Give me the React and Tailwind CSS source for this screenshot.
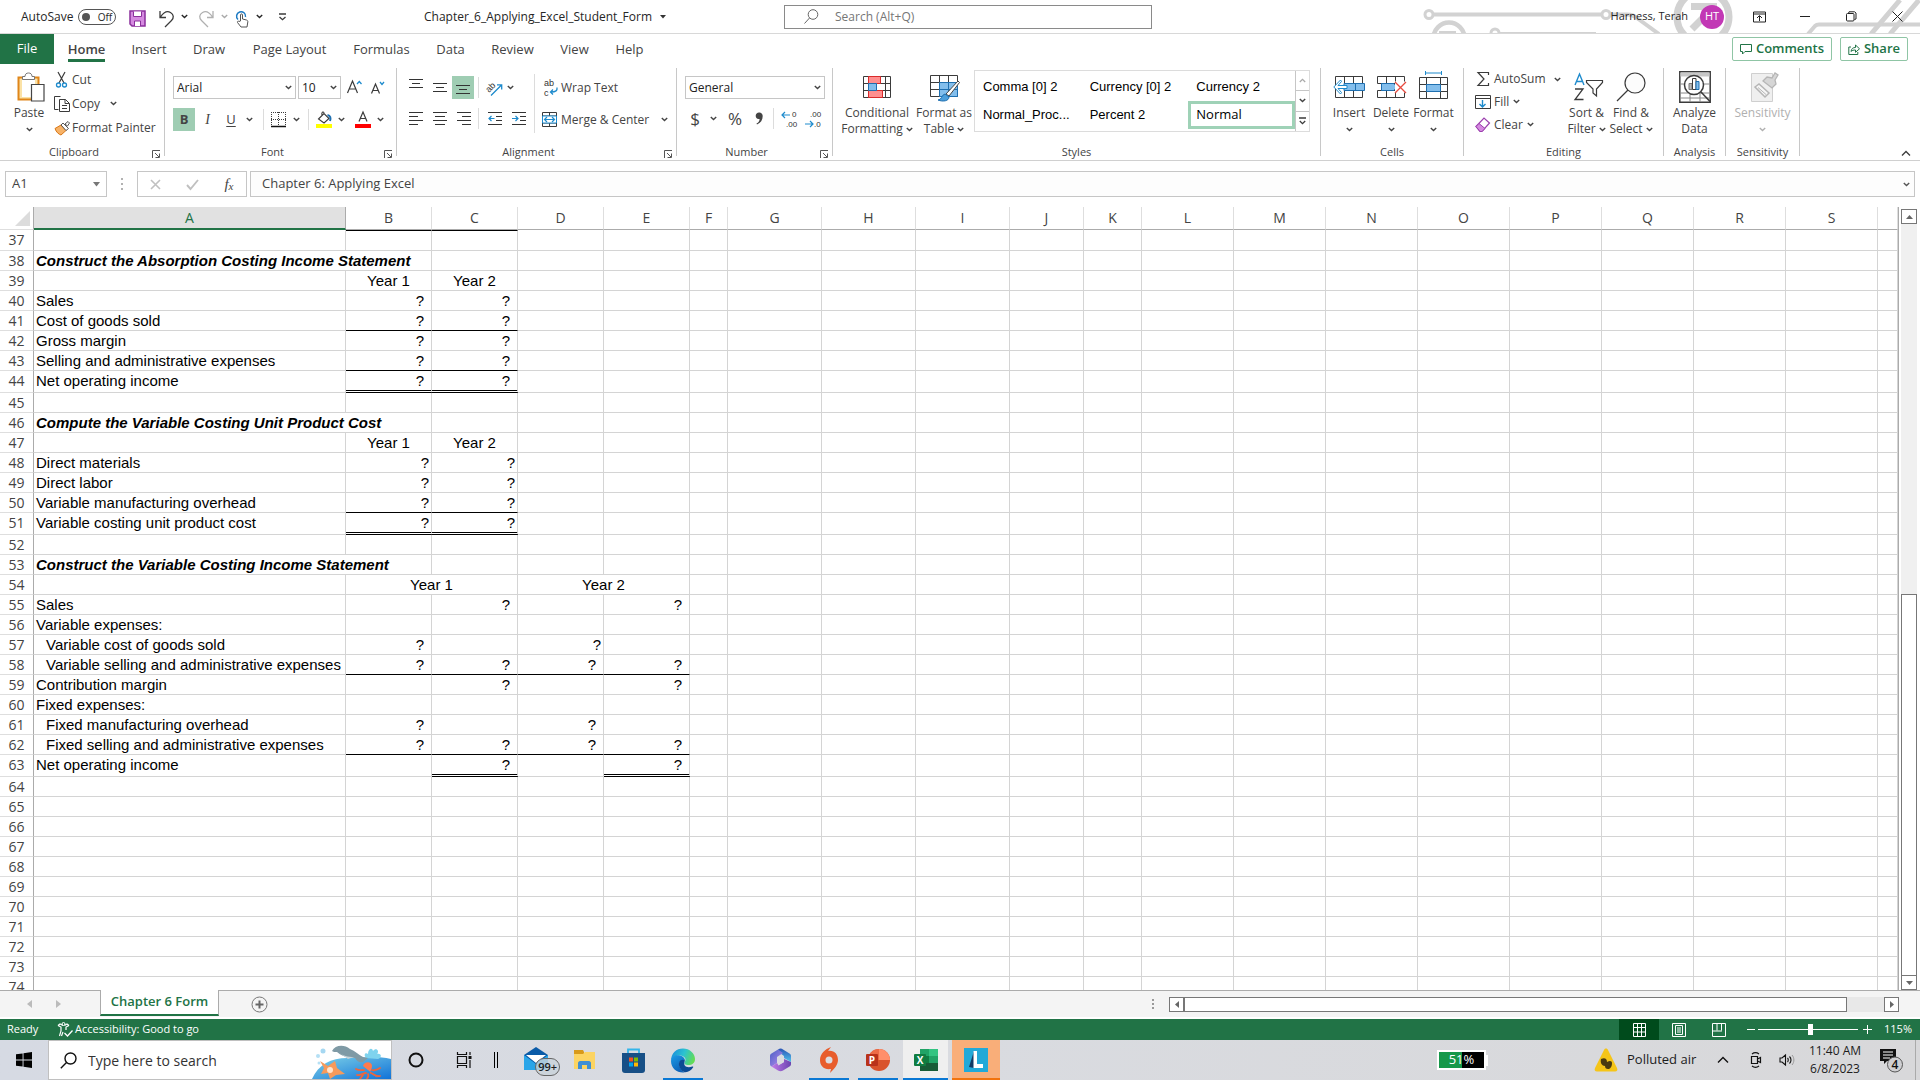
import React from "react";

const UI = "font-['Open_Sans','Noto_Sans',sans-serif]";

function Chev({ className = "text-[#444]" }) {
  return (
    <svg width="7" height="5" viewBox="0 0 7 5" className={`shrink-0 ${className}`} fill="none" stroke="currentColor" strokeWidth="1.4">
      <path d="M.8 1 3.500 3.600 6.200 1" />
    </svg>
  );
}

function Icon({ w = 16, h = 16, children, className = "" }) {
  return (
    <svg width={w} height={h} viewBox={`0 0 ${w} ${h}`} fill="none" stroke="#3b3b3b" strokeWidth="1" className={`shrink-0 overflow-visible ${className}`}>
      {children}
    </svg>
  );
}

function Glyphs({ x, y, size = 8, children }) {
  return (
    <text x={x} y={y} fontSize={size} fill="#333" stroke="none" className="font-['Liberation_Sans',sans-serif]">
      {children}
    </text>
  );
}

function Btn({ label, className = "", children }) {
  return (
    <button type="button" aria-label={label} className={`flex shrink-0 items-center justify-center ${className}`}>
      {children}
    </button>
  );
}

/* ---------- title bar ---------- */

function TitleArt() {
  return (
    <svg width="520" height="33" viewBox="0 0 520 33" className="pointer-events-none absolute top-0 right-0" fill="none" stroke="#d2d2d2" strokeWidth="4">
      <circle cx="29" cy="14.500" r="4" strokeWidth="3" />
      <path d="M33 14.500H202" />
      <circle cx="206" cy="14.500" r="4" strokeWidth="3" />
      <path d="M210 14.500h17c6 0 8 2 12 5L259 34" />
      <circle cx="49" cy="38" r="15.500" strokeWidth="4.500" />
      <path d="M39 33h17" />
      <circle cx="95" cy="33" r="4" strokeWidth="3" />
      <path d="M99 33.500h97" strokeWidth="3" />
      <circle cx="303" cy="17" r="26" strokeWidth="7" />
      <path d="M291 6.500h26" strokeWidth="7" />
      <path d="M292 29 312 9" strokeWidth="7" />
      <path d="M408 34l7-8c1-1 2-1.500 4-1.500H520" />
      <path d="M471 34 500 0M490 34 519 0" strokeWidth="5" />
    </svg>
  );
}

function TitleBar() {
  return (
    <header className="relative flex h-[34px] shrink-0 items-center border-b border-[#d8d8d8] bg-white text-[12px] text-[#262626]">
      <TitleArt />
      <div className="flex w-[424px] shrink-0 items-center pl-[21px]">
        <span className="w-[57px] whitespace-nowrap">AutoSave</span>
        <Btn label="AutoSave off" className="h-4 w-[38px] gap-2 rounded-full border border-[#555] text-[10px] leading-none">
          <span className="size-2 rounded-full bg-[#555]" />
          <span>Off</span>
        </Btn>
        <Btn label="Save" className="ml-[11px] w-5">
          <Icon w={17} h={17} className="mt-1">
            <path d="M1 1h15v15H3l-2-2z" fill="#d58ae0" stroke="#8b2f9c" strokeWidth="1.500" />
            <path d="M4.500 1.500v5h8v-5" fill="#fff" stroke="#8b2f9c" />
            <path d="M5.500 16v-5h6v5" fill="#fff" stroke="#8b2f9c" />
          </Icon>
        </Btn>
        <Btn label="Undo" className="ml-[7px] w-6">
          <Icon w={15} h={17} className="mt-1">
            <path d="M1 1v6.500h6M1.500 7C4.500 2.500 8 .5 11.500 2.500s3.500 5.500 1 8L6 17" strokeWidth="1.300" />
          </Icon>
        </Btn>
        <Chev className="ml-[3px]" />
        <Btn label="Redo" className="ml-[6px] w-6">
          <Icon w={15} h={17} className="mt-1">
            <path d="M14 1v6.500H8M13.500 7C10.500 2.500 7 .5 3.500 2.500s-3.500 5.500-1 8L9 17" stroke="#b0b0b0" strokeWidth="1.300" />
          </Icon>
        </Btn>
        <Chev className="ml-[3px] text-[#aaa]" />
        <Btn label="Touch mode" className="ml-1 w-5">
          <Icon w={14} h={18} className="mt-1">
            <path d="M3 9.500A4.500 4.500 0 1 1 10.500 7" stroke="#1e7bc4" strokeWidth="1.500" />
            <path d="M5.500 11V5c0-1.500 2-1.500 2 0v4l4 1c1 .3 1.500 1 1.300 2L12 17H6l-3.500-4.500c-.6-1 .8-1.800 1.500-1z" fill="#fff" stroke="#555" />
          </Icon>
        </Btn>
        <Chev className="ml-1" />
        <Btn label="Customize toolbar" className="ml-[11px] w-4">
          <Icon w={9} h={8}>
            <path d="M1 1h7M1.500 4 4.500 6.700 7.500 4" strokeWidth="1.300" />
          </Icon>
        </Btn>
      </div>
      <div className="flex w-[360px] shrink-0 items-center gap-2">
        <span>Chapter_6_Applying_Excel_Student_Form</span>
        <svg width="6" height="4" fill="#333"><path d="M0 0h6L3 3.500z" /></svg>
      </div>
      <label className="flex h-6 w-[368px] shrink-0 items-center gap-4 border border-[#8a8a8a] bg-white pl-[19px]">
        <Icon w={15} h={15}>
          <circle cx="9" cy="5.500" r="4.800" stroke="#666" />
          <path d="M5.500 9 .5 14.500" stroke="#666" />
        </Icon>
        <input aria-label="Search" placeholder="Search (Alt+Q)" className="min-w-0 flex-1 bg-transparent text-[12px] outline-none placeholder:text-[#767676]" />
      </label>
      <div className="relative ml-auto flex items-center">
        <span className="mr-3 text-[11px]">Harness, Terah</span>
        <Btn label="Account" className="mr-3 size-6 rounded-full bg-[#c238b5] text-[11px] text-white">HT</Btn>
        <Btn label="Ribbon display options" className="h-8 w-[46px]">
          <Icon w={13} h={12}>
            <path d="M.5 1h12v10H.5zM.5 3h12M6.500 10V5M4 7l2.500-2.500L9 7" stroke="#222" />
          </Icon>
        </Btn>
        <Btn label="Minimize" className="h-8 w-[46px]">
          <Icon w={10} h={2}><path d="M0 .5h10" stroke="#222" /></Icon>
        </Btn>
        <Btn label="Restore" className="h-8 w-[46px]">
          <Icon w={11} h={11}>
            <rect x=".5" y="2.500" width="7.500" height="7.500" rx="1" stroke="#222" />
            <path d="M2.500 2.500 3 .8h5.500L10 2v6l-1.500.5" stroke="#222" />
          </Icon>
        </Btn>
        <Btn label="Close" className="h-8 w-[46px]">
          <Icon w={11} h={11}><path d="m.5.5 10 10m0-10-10 10" stroke="#222" /></Icon>
        </Btn>
      </div>
    </header>
  );
}

/* ---------- tabs ---------- */

const TABS = [
  ["Home", "w-[65px]"],
  ["Insert", "w-[60px]"],
  ["Draw", "w-[60px]"],
  ["Page Layout", "w-[101px]"],
  ["Formulas", "w-[83px]"],
  ["Data", "w-[55px]"],
  ["Review", "w-[69px]"],
  ["View", "w-[55px]"],
  ["Help", "w-[55px]"],
];

function Tabs() {
  return (
    <nav className="flex h-[30px] shrink-0 items-center bg-white text-[13px] text-[#444]">
      <button type="button" className="h-[30px] w-[54px] bg-[#217346] text-white">File</button>
      {TABS.map(([t, w]) => (
        <button key={t} type="button" className={`flex h-[30px] justify-center whitespace-nowrap ${w}`}>
          <span className={`h-7 border-b-3 leading-[30px] ${t === "Home" ? "border-[#217346] font-semibold" : "border-transparent"}`}>{t}</span>
        </button>
      ))}
      <div className="ml-auto flex gap-2 pr-3 font-semibold text-[#217346]">
        <button type="button" className="flex h-6 w-[100px] items-center justify-center gap-1 rounded-xs border border-[#8fc5a5]">
          <Icon w={12} h={12}><path d="M.5 1.500h11v7H5L2.500 11V8.500h-2z" stroke="#217346" /></Icon>
          Comments
        </button>
        <button type="button" className="flex h-6 w-[68px] items-center justify-center gap-1 rounded-xs border border-[#8fc5a5]">
          <Icon w={12} h={12}>
            <path d="M3 4H.8v7.500h9V9M3 8.500c.5-3 2-4 4.500-4V2l4 3.800-4 3.500V7C5.500 7 4 7.300 3 8.500z" stroke="#217346" />
          </Icon>
          Share
        </button>
      </div>
    </nav>
  );
}

/* ---------- ribbon ---------- */

function Group({ name, width, launcher = true, children }) {
  return (
    <section aria-label={name} className={`mt-1 flex h-[88px] shrink-0 flex-col border-r border-[#c8c8c8] ${width}`}>
      <div className="flex h-[76px]">{children}</div>
      <div className="flex h-3 items-start">
        <span className="flex-1 text-center text-[11px] leading-4">{name}</span>
        {launcher && (
          <Btn label={`${name} settings`} className="h-4 w-4 pt-1">
            <Icon w={9} h={9}>
              <path d="M.5 8V.5H8M3 3l4 4M7.500 3.500v4h-4" stroke="#555" />
            </Icon>
          </Btn>
        )}
      </div>
    </section>
  );
}

function Big({ lines, width, icon, chev = true, muted = false }) {
  return (
    <button type="button" className={`flex shrink-0 flex-col items-center whitespace-nowrap text-[12px] leading-4 ${width} ${muted ? "text-[#b0b0b0]" : ""}`}>
      <span className="flex h-[37px] items-center justify-center">{icon}</span>
      <span>{lines[0]}</span>
      <span className="flex h-4 items-center gap-[3px]">
        {lines[1]}
        {chev && <Chev className={muted ? "text-[#b0b0b0]" : "text-[#444]"} />}
      </span>
    </button>
  );
}

function VSep({ h = "h-[21px]" }) {
  return <span className={`w-px shrink-0 bg-[#dcdcdc] ${h}`} />;
}

function Lines({ rows, children, y0 = 1 }) {
  return (
    <Icon w={14} h={15}>
      <path d={rows.map(([x, w], i) => `M${x} ${y0 + i * 4 + 0.5}h${w}`).join("")} stroke="#333" />
      {children}
    </Icon>
  );
}

const LEFT = [[0, 14], [0, 9], [0, 14], [0, 9]];
const MID = [[0, 14], [2, 10], [0, 14], [2, 10]];
const RIGHT = [[0, 14], [5, 9], [0, 14], [5, 9]];
const SHORT3 = [[0, 14], [3, 8], [0, 14]];

function Clipboard() {
  return (
    <Group name="Clipboard" width="w-[165px]">
      <Big
        width="w-[58px]"
        lines={["Paste", ""]}
        icon={
          <Icon w={28} h={30} className="ml-1">
            <path d="M1.500 5.500h20v22h-20z" fill="#fbe2a6" stroke="#e0861a" strokeWidth="2" />
            <path d="M5 8h13v17H5z" fill="#fff" stroke="none" />
            <path d="M5.500 7.500v-3H8C8 2 9.500 1 11.500 1S15 2 15 4.500h2.500v3z" fill="#fff" stroke="#777" />
            <path d="M14.500 12.500h12.500v16.500H14.500z" fill="#fff" stroke="#444" strokeWidth="1.200" />
          </Icon>
        }
      />
      <div className="-ml-1 flex flex-col text-[12px]">
        <button type="button" className="flex h-[23px] items-center">
          <span className="flex w-[18px] pl-[2px]">
            <Icon w={11} h={16}>
              <path d="M2 0 8 11M9 0 3 11" strokeWidth="1.200" />
              <circle cx="2.500" cy="13" r="2" stroke="#1e8bcd" strokeWidth="1.300" />
              <circle cx="8.500" cy="13" r="2" stroke="#1e8bcd" strokeWidth="1.300" />
            </Icon>
          </span>
          Cut
        </button>
        <button type="button" className="flex h-[25px] items-center">
          <span className="flex w-[18px]">
            <Icon w={16} h={16}>
              <path d="M4.500 13.500h-4V.5h6M5.500 3.500h6l4 4v8h-10zM11 3.500v4h4M8 9.500h5M8 12.500h5" />
            </Icon>
          </span>
          Copy
          <Chev className="ml-[10px]" />
        </button>
        <button type="button" className="flex h-[24px] items-center whitespace-nowrap">
          <span className="flex w-[18px]">
            <Icon w={16} h={15}>
              <path d="M1 7.500 7 4l5 5.500L7 14c-2-.5-5-3-6-6.500z" fill="#f7b267" stroke="#d97614" />
              <path d="m7 4 2-2 5.500 5.500L12 9.500zM11 3l3-2.500 1.500 1.500L13.500 5z" fill="#fff" stroke="#555" />
            </Icon>
          </span>
          Format Painter
        </button>
      </div>
    </Group>
  );
}

function FontGroup() {
  return (
    <Group name="Font" width="w-[232px]">
      <div className="flex flex-col pl-2 pt-2">
        <div className="flex h-[23px] items-center">
          <div className="flex h-[23px] w-[123px] items-center border border-[#c6c6c6] bg-white px-[3px]">
            <input aria-label="Font name" defaultValue="Arial" className="min-w-0 flex-1 text-[12px] text-[#222] outline-none" />
            <Chev />
          </div>
          <div className="ml-[2px] flex h-[23px] w-[43px] items-center border border-[#c6c6c6] bg-white px-[3px]">
            <input aria-label="Font size" defaultValue="10" className="min-w-0 flex-1 text-[12px] text-[#222] outline-none" />
            <Chev />
          </div>
          <Btn label="Increase font size" className="ml-[2px] w-[22px]">
            <Icon w={15} h={15}>
              <path d="m.5 13 5-12 5 12M2.200 9h6.600" strokeWidth="1.200" />
              <path d="m10 4 2.300-2.500L14.500 4" stroke="#1e8bcd" strokeWidth="1.300" />
            </Icon>
          </Btn>
          <Btn label="Decrease font size" className="w-[26px]">
            <Icon w={14} h={14}>
              <path d="m.5 12.500 4-9.500 4 9.500M2 9.500h5" strokeWidth="1.200" />
              <path d="m9 1 2 2.500L13 1" stroke="#1e8bcd" strokeWidth="1.300" />
            </Icon>
          </Btn>
        </div>
        <div className="mt-[9px] flex h-[23px] items-center">
          <Btn label="Bold" className="h-[23px] w-[22px] bg-[#9fcdb3] text-[13px] font-bold">B</Btn>
          <Btn label="Italic" className="w-[25px] font-['Liberation_Serif',serif] text-[14px] italic">I</Btn>
          <Btn label="Underline" className="w-[22px] text-[13px] underline underline-offset-2">U</Btn>
          <Chev className="ml-1" />
          <span className="w-[10px]" />
          <VSep />
          <Btn label="Borders" className="ml-[7px]">
            <Icon w={15} h={16}>
              <path d="M.5 0v14M14.500 0v14M0 .5h15M7.500 0v14M0 7.500h15" strokeDasharray="1 1" />
              <path d="M0 14.500h15" stroke="#111" strokeWidth="1.500" />
            </Icon>
          </Btn>
          <Chev className="ml-[7px]" />
          <span className="w-2" />
          <VSep />
          <Btn label="Fill colour" className="ml-[7px]">
            <Icon w={16} h={17}>
              <path d="m2.500 8 5.500-5.500L13 7.500 8 12zM8 2.500C8 0 5 .5 6 4.500" strokeWidth="1.100" />
              <path d="M11.500 4c3 .5 3.500 3 2.500 6" stroke="#1e6fb0" strokeWidth="2" />
              <path d="M0 13h16v4H0z" fill="#ffff00" stroke="none" />
            </Icon>
          </Btn>
          <Chev className="ml-[6px]" />
          <Btn label="Font colour" className="ml-[10px]">
            <Icon w={16} h={17}>
              <path d="m4 10.500 4-9.500 4 9.500M5.300 7.500h5.400" strokeWidth="1.200" />
              <path d="M0 13h16v4H0z" fill="#f00" stroke="none" />
            </Icon>
          </Btn>
          <Chev className="ml-[6px]" />
        </div>
      </div>
    </Group>
  );
}

function Alignment() {
  return (
    <Group name="Alignment" width="w-[280px]">
      <div className="flex w-[137px] shrink-0 flex-col pl-[7px] pt-2">
        <div className="flex h-[23px] items-center">
          <Btn label="Top align" className="w-6 pb-1"><Lines rows={SHORT3} /></Btn>
          <Btn label="Middle align" className="w-6"><Lines rows={SHORT3} y0={3} /></Btn>
          <Btn label="Bottom align" className="h-[23px] w-[22px] bg-[#9fcdb3]"><Lines rows={SHORT3} y0={5} /></Btn>
          <span className="w-1" />
          <VSep />
          <Btn label="Orientation" className="ml-[7px]">
            <Icon w={17} h={16}>
              <g transform="rotate(-45 5 8)"><Glyphs x="0" y="10" size={9}>ab</Glyphs></g>
              <path d="M5 15.500 15.500 5M11 4.800h4.700v4.700" stroke="#1e8bcd" strokeWidth="1.300" />
            </Icon>
          </Btn>
          <Chev className="ml-1" />
        </div>
        <div className="mt-2 flex h-[23px] items-center">
          <Btn label="Align left" className="w-6"><Lines rows={LEFT} /></Btn>
          <Btn label="Centre" className="w-6"><Lines rows={MID} /></Btn>
          <Btn label="Align right" className="w-6"><Lines rows={RIGHT} /></Btn>
          <span className="w-[2px]" />
          <VSep />
          <Btn label="Decrease indent" className="ml-[4px] w-6">
            <Lines rows={[[0, 14], [8, 6], [8, 6], [0, 14]]}>
              <path d="M6.500 7.500H1M3.500 5 1 7.500 3.500 10" stroke="#1e8bcd" strokeWidth="1.200" />
            </Lines>
          </Btn>
          <Btn label="Increase indent" className="w-6">
            <Lines rows={[[0, 14], [8, 6], [8, 6], [0, 14]]}>
              <path d="M0 7.500h5.500M3.500 5 6 7.500 3.500 10" stroke="#1e8bcd" strokeWidth="1.200" />
            </Lines>
          </Btn>
        </div>
      </div>
      <span className="mt-[6px] h-[59px] w-px bg-[#dcdcdc]" />
      <div className="flex flex-col pl-[7px] pt-2 text-[12px]">
        <button type="button" className="flex h-[23px] items-center gap-[3px]">
          <Icon w={16} h={17}>
            <Glyphs x="2" y="7" size={9}>ab</Glyphs>
            <Glyphs x="2" y="17" size={9}>c</Glyphs>
            <path d="M15 8.500c.5 3-1 4.500-6 4.500M11 10.500 8.500 13l2.500 2.500" stroke="#1e8bcd" strokeWidth="1.300" />
          </Icon>
          Wrap Text
        </button>
        <button type="button" className="mt-[9px] flex h-[23px] items-center gap-1 whitespace-nowrap">
          <Icon w={15} h={15}>
            <path d="M.5.500h14v14H.5zM.5 4h14M.5 11h14M7.500.5V4M7.500 11v3.500" />
            <path d="M.5 4h14v7H.5z" fill="#fff" stroke="#1e8bcd" />
            <path d="M2.500 7.500h10M5 5 2.500 7.500 5 10M10 5l2.500 2.500L10 10" stroke="#1e8bcd" strokeWidth="1.200" />
          </Icon>
          Merge &amp; Center
          <Chev className="ml-2" />
        </button>
      </div>
    </Group>
  );
}

function NumberGroup() {
  return (
    <Group name="Number" width="w-[156px]">
      <div className="flex flex-col pl-2 pt-2">
        <div className="flex h-[23px] w-[140px] items-center border border-[#c6c6c6] bg-white px-[3px]">
          <input aria-label="Number format" defaultValue="General" className="min-w-0 flex-1 text-[12px] text-[#222] outline-none" />
          <Chev />
        </div>
        <div className="mt-2 flex h-[23px] items-center">
          <Btn label="Accounting format" className="w-5 text-[17px]">$</Btn>
          <Chev className="ml-[5px]" />
          <Btn label="Percent style" className="ml-[6px] w-6 text-[17px]">%</Btn>
          <Btn label="Comma style" className="w-6">
            <Icon w={9} h={13}>
              <path d="M4 .5a3.300 3.300 0 0 1 3.700 3.500c0 4-2 7-5.700 8.500l-.5-1C3.500 10.500 4.500 9 4.600 7 2 7.500.7 6 .7 3.800.7 2 2.200.5 4 .5z" fill="#444" stroke="none" />
            </Icon>
          </Btn>
          <span className="w-[2px]" />
          <VSep />
          <Btn label="Increase decimal" className="ml-[3px] w-6">
            <Icon w={17} h={18}>
              <path d="M9 5H1M4 2 1 5l3 3" stroke="#1e8bcd" strokeWidth="1.200" />
              <Glyphs x="11" y="7">0</Glyphs>
              <Glyphs x="5" y="17">.00</Glyphs>
            </Icon>
          </Btn>
          <Btn label="Decrease decimal" className="w-6">
            <Icon w={17} h={18}>
              <Glyphs x="5" y="7">.00</Glyphs>
              <Glyphs x="9" y="17">.0</Glyphs>
              <path d="M0 14h8M5 11l3 3-3 3" stroke="#1e8bcd" strokeWidth="1.200" />
            </Icon>
          </Btn>
        </div>
      </div>
    </Group>
  );
}

const STYLES = ["Comma [0] 2", "Currency [0] 2", "Currency 2", "Normal_Proc...", "Percent 2", "Normal"];

function Styles() {
  return (
    <Group name="Styles" width="w-[488px]" launcher={false}>
      <Big
        width="w-[76px] ml-[6px]"
        lines={["Conditional", "Formatting"]}
        icon={
          <Icon w={28} h={22}>
            <path d="M.5.500h27v21H.5zM5.500.5v21M22.500.5v21M.5 7.500h27M.5 14.500h27" fill="#fff" />
            <path d="M5.500.5h12v7h-12zM5.500 14.500h14v7h-14z" fill="#ff8f8f" stroke="#d92b2b" />
            <path d="M5.500 7.500h8v7h-8z" fill="#83beec" stroke="#1e6fb0" />
          </Icon>
        }
      />
      <Big
        width="w-[58px]"
        lines={["Format as", "Table"]}
        icon={
          <Icon w={30} h={28} className="mt-1 ml-[2px]">
            <path d="M.5.500h27v21H.5zM9.500.5v21M18.500.5v21M.5 7.500h27M.5 14.500h27" fill="#fff" />
            <path d="M9.500 7.500h18v14h-18z" fill="#83beec" stroke="#1e6fb0" />
            <path d="M9.500 14.500h18M18.500 7.500v14" stroke="#1e6fb0" />
            <path d="m16 19 12-13 1.500 1.500L19 21z" fill="#fff" stroke="#444" />
            <path d="M8 25c4 0 3-5 7-6l4 3c0 4-6 5-11 3z" fill="#4d9fdb" stroke="#1e6fb0" />
          </Icon>
        }
      />
      <div className="ml-[1px] mt-[2px] flex h-[62px] w-[336px] border border-[#dcdcdc] bg-white">
        <div className="grid w-[320px] grid-cols-3 grid-rows-2 pt-[1px] pb-[2px] font-['Liberation_Sans',Arial,sans-serif] text-[13px] text-black">
          {STYLES.map((s) => (
            <button
              key={s}
              type="button"
              className={`flex items-center whitespace-nowrap border-3 pl-[5px] text-left ${s === "Normal" ? "font-['Open_Sans','Noto_Sans',sans-serif] border-[#9fd2b7]" : "border-transparent"}`}
            >
              {s}
            </button>
          ))}
        </div>
        <div className="flex flex-1 flex-col border-l border-[#c6c6c6]">
          <Btn label="Scroll up" className="flex-1"><Icon w={7} h={5}><path d="M.8 4 3.500 1.400 6.200 4" stroke="#aaa" strokeWidth="1.300" /></Icon></Btn>
          <Btn label="Scroll down" className="flex-1 border-y border-[#c6c6c6]"><Chev /></Btn>
          <Btn label="More styles" className="flex-1"><Icon w={7} h={8}><path d="M0 1h7M.8 4 3.500 6.600 6.200 4" strokeWidth="1.300" /></Icon></Btn>
        </div>
      </div>
    </Group>
  );
}

function Cells() {
  return (
    <Group name="Cells" width="w-[143px]" launcher={false}>
      <Big
        width="w-[42px] ml-[7px]"
        lines={["Insert", ""]}
        icon={
          <Icon w={32} h={22}>
            <path d="M2.500.5h27v21h-27zM11.500.5v21M20.500.5v21" fill="#fff" />
            <path d="M11 7.500h20.500v7H11z" fill="#83beec" stroke="#1e6fb0" />
            <path d="M22.500 7.500v7" stroke="#1e6fb0" />
            <path d="M14 9.500H5l3.500-4L7.500 4 .8 11l6.700 7 1-1.500-3.500-4h9z" fill="#fff" stroke="#1e8bcd" />
          </Icon>
        }
      />
      <Big
        width="w-[42px]"
        lines={["Delete", ""]}
        icon={
          <Icon w={30} h={22} className="ml-[2px]">
            <path d="M.5.500h27v7H.5zM.5 14.500h27v7H.5zM9.500.5v7M18.500.5v7M9.500 14.500v7M18.500 14.500v7" fill="#fff" />
            <path d="M4.500 7.500h12l4 3.500-4 3.500h-12z" fill="#83beec" stroke="#1e6fb0" />
            <path d="M18 5.500h11v11H18z" fill="#fff" stroke="none" />
            <path d="m18 6 11 11M29 6 18 17" stroke="#e84a3f" strokeWidth="1.300" />
          </Icon>
        }
      />
      <Big
        width="w-[43px]"
        lines={["Format", ""]}
        icon={
          <Icon w={29} h={28} className="-mt-1">
            <path d="M6.500 2h16M6.500 0v4M22.500 0v4" stroke="#1e8bcd" />
            <path d="M.5 6.500h28v21H.5zM7.500 6.500v21M21.500 6.500v21M.5 13.500h28M.5 20.500h28" fill="#fff" />
            <path d="M7.500 13.500h14v7h-14z" fill="#83beec" stroke="#1e6fb0" />
          </Icon>
        }
      />
    </Group>
  );
}

function Editing() {
  return (
    <Group name="Editing" width="w-[200px]" launcher={false}>
      <div className="flex w-[101px] shrink-0 flex-col pr-1 pl-[11px] text-[12px]">
        <button type="button" className="flex h-[22px] items-center">
          <span className="flex w-[19px] pl-[2px]"><Icon w={12} h={14}><path d="M11.500 3V.5H1L7 7l-6 6.500h10.500V11" strokeWidth="1.200" /></Icon></span>
          AutoSum
          <Chev className="ml-auto" />
        </button>
        <button type="button" className="flex h-[23px] items-center">
          <span className="flex w-[19px]">
            <Icon w={16} h={14}>
              <path d="M.5.500h15v13H.5zM.5 3.500h15" />
              <path d="M7.500 5v7M4.500 9l3 3 3-3" stroke="#1e8bcd" strokeWidth="1.400" />
            </Icon>
          </span>
          Fill
          <Chev className="ml-1" />
        </button>
        <button type="button" className="flex h-[23px] items-center">
          <span className="flex w-[19px]">
            <Icon w={16} h={16}>
              <path d="m1 9.500 8-8.500 5.500 5L7 14.500H5z" fill="#fff" stroke="#9b3fae" strokeWidth="1.200" />
              <path d="m1 9.500 3-3 6 5-3 3H5z" fill="#d58ae0" stroke="#9b3fae" />
            </Icon>
          </span>
          Clear
          <Chev className="ml-1" />
        </button>
      </div>
      <Big
        width="w-[43px]"
        lines={["Sort &", "Filter"]}
        icon={
          <Icon w={29} h={28} className="ml-1">
            <path d="m1 12 4.500-11L10 12M2.500 8.500h6" stroke="#1e8bcd" strokeWidth="1.400" />
            <path d="M1 16h8L1 26.500h8.500" strokeWidth="1.300" />
            <path d="M12.500 7.500h16v2L22.500 16v7l-3.500-3v-4l-6.500-6.500z" fill="#fff" strokeWidth="1.200" />
          </Icon>
        }
      />
      <Big
        width="w-[46px]"
        lines={["Find &", "Select"]}
        icon={
          <Icon w={30} h={30}>
            <circle cx="19" cy="11" r="10" fill="#fcfcfc" strokeWidth="1.200" />
            <path d="m12 18-11 11" strokeWidth="1.300" />
          </Icon>
        }
      />
    </Group>
  );
}

function Ribbon() {
  return (
    <div className="flex h-[97px] shrink-0 border-b border-[#d0d0d0] bg-white text-[#444]">
      <Clipboard />
      <FontGroup />
      <Alignment />
      <NumberGroup />
      <Styles />
      <Cells />
      <Editing />
      <Group name="Analysis" width="w-[62px]" launcher={false}>
        <Big
          width="w-[61px]"
          chev={false}
          lines={["Analyze", "Data"]}
          icon={
            <Icon w={32} h={32}>
              <path d="M.8.8h30.400v30.400H.8z" fill="#fff" strokeWidth="1.500" />
              <path d="M1.500 1.500h29v4h-29z" fill="#c8c8c8" stroke="none" />
              <path d="M1 13h30M1 22h30M1 27h30M11 22v9M21 22v9" stroke="#888" />
              <circle cx="15" cy="14" r="9.500" fill="#fff" strokeWidth="1.500" />
              <path d="m22 21 9 9.500" strokeWidth="1.600" />
              <path d="M10 12.500h3v6h-3z" fill="#bbb" stroke="#777" />
              <path d="M13.500 7.500h3.500v11h-3.500z" fill="#fff" />
              <path d="M17 10.500h3v8h-3z" fill="#83beec" stroke="#1e6fb0" />
            </Icon>
          }
        />
      </Group>
      <Group name="Sensitivity" width="w-[74px]" launcher={false}>
        <Big
          width="w-[73px]"
          muted
          lines={["Sensitivity", ""]}
          icon={
            <Icon w={28} h={30} className="ml-1">
              <path d="M.5 1.500h21v28H.5z" fill="#efefef" stroke="#cfcfcf" />
              <path d="m4 15 4-3 10 9-4 4z" fill="#f6f6f6" stroke="#b5b5b5" strokeWidth="1.500" />
              <path d="m7 15.500 8 7" stroke="#b5b5b5" />
              <path d="m12 9 4-4 5 1 3-5 3 2-3 5 1 4-4 4z" fill="#d6d6d6" stroke="#b5b5b5" strokeWidth="1.300" />
            </Icon>
          }
        />
      </Group>
      <Btn label="Collapse ribbon" className="mr-2 ml-auto w-3 self-end pb-[3px]">
        <Icon w={10} h={7}><path d="m1 5.500 4-4 4 4" strokeWidth="1.300" /></Icon>
      </Btn>
    </div>
  );
}

/* ---------- formula bar ---------- */

function FormulaBar() {
  return (
    <div className="flex h-[46px] shrink-0 bg-white px-[5px] pt-[10px] text-[12px] text-[#444]">
      <div className="flex h-[26px] w-[102px] items-center border border-[#c6c6c6] px-[6px]">
        <input aria-label="Name box" defaultValue="A1" className="min-w-0 flex-1 text-[13px] outline-none" />
        <svg width="7" height="5" fill="#777"><path d="M0 0h7L3.500 4.500z" /></svg>
      </div>
      <div className="flex h-[26px] w-[30px] items-center justify-center">
        <Icon w={2} h={12}><path d="M1 0v12" stroke="#999" strokeWidth="1.500" strokeDasharray="2 3" /></Icon>
      </div>
      <div className="flex h-[26px] w-[110px] items-center justify-around border border-[#c6c6c6]">
        <Btn label="Cancel"><Icon w={11} h={11}><path d="m1 1 9 9m0-9-9 9" stroke="#c0c0c0" strokeWidth="1.600" /></Icon></Btn>
        <Btn label="Enter"><Icon w={13} h={11}><path d="m1 6 3.500 4L12 1" stroke="#c0c0c0" strokeWidth="1.900" /></Icon></Btn>
        <Btn label="Insert function" className="font-['Liberation_Serif',serif] text-[15px] leading-none italic">
          f<span className="pt-1 text-[11px]">x</span>
        </Btn>
      </div>
      <div className="ml-[3px] flex h-[26px] flex-1 items-center border border-[#c6c6c6] bg-[#fdfdfd] pr-[4px] pl-[11px]">
        <input aria-label="Formula bar" defaultValue="Chapter 6: Applying Excel" className="min-w-0 flex-1 text-[13px] outline-none" />
        <Chev className="text-[#555]" />
      </div>
    </div>
  );
}

/* ---------- grid ---------- */

const COLS = [
  ["A", "w-[312px]"], ["B", "w-[86px]"], ["C", "w-[86px]"], ["D", "w-[86px]"], ["E", "w-[86px]"],
  ["F", "w-[38px]"], ["G", "w-[94px]"], ["H", "w-[94px]"], ["I", "w-[94px]"], ["J", "w-[74px]"],
  ["K", "w-[58px]"], ["L", "w-[92px]"], ["M", "w-[92px]"], ["N", "w-[92px]"], ["O", "w-[92px]"],
  ["P", "w-[92px]"], ["Q", "w-[92px]"], ["R", "w-[92px]"], ["S", "w-[92px]"], ["", ""],
];

/* q: indented question mark, r: flush right, c: centred text */
const q = (line) => ({ t: "?", a: "pr-[7px] text-right", line });
const r = (line) => ({ t: "?", a: "pr-[2px] text-right", line });
const c = (t, span = 1) => ({ t, a: "text-center", span });
const e = (line) => ({ t: "", a: "", line });
const A = (t, a = "pl-[2px]") => ({ t, a });
const IND = "pl-3";
const head = (t) => [{ t, a: "pl-[2px] font-bold italic", span: 2 }];

const DATA = {
  37: [A(""), e("top"), e("top")],
  38: head("Construct the Absorption Costing Income Statement"),
  39: [A(""), c("Year 1"), c("Year 2")],
  40: [A("Sales"), q(), q()],
  41: [A("Cost of goods sold"), q("one"), q("one")],
  42: [A("Gross margin"), q(), q()],
  43: [A("Selling and administrative expenses"), q("one"), q("one")],
  44: [A("Net operating income"), q("two"), q("two")],
  46: head("Compute the Variable Costing Unit Product Cost"),
  47: [A(""), c("Year 1"), c("Year 2")],
  48: [A("Direct materials"), r(), r()],
  49: [A("Direct labor"), r(), r()],
  50: [A("Variable manufacturing overhead"), r("one"), r("one")],
  51: [A("Variable costing unit product cost"), r("two"), r("two")],
  53: head("Construct the Variable Costing Income Statement"),
  54: [A(""), c("Year 1", 2), c("Year 2", 2)],
  55: [A("Sales"), e(), q(), e(), q()],
  56: [A("Variable expenses:")],
  57: [A("Variable cost of goods sold", IND), q(), e(), r()],
  58: [A("Variable selling and administrative expenses", IND), q("one"), q("one"), q("one"), q("one")],
  59: [A("Contribution margin"), e(), q(), e(), q()],
  60: [A("Fixed expenses:")],
  61: [A("Fixed manufacturing overhead", IND), q(), e(), q()],
  62: [A("Fixed selling and administrative expenses", IND), q("one"), q("one"), q("one"), q("one")],
  63: [A("Net operating income"), e(), q("two"), e(), q("two")],
};

const LINE = {
  one: "border-b border-b-black",
  two: "border-b-3 [border-bottom-style:double] border-b-black",
  top: "border-t border-t-black border-b border-b-[#d4d4d4]",
};

function rowHeight(n) {
  if (n === 37) return "h-[21px]";
  if (n === 44 || n === 51 || n === 63) return "h-[22px]";
  return "h-[20px]";
}

function Row({ n }) {
  const cells = [...(DATA[n] || [])];
  let used = cells.reduce((s, x) => s + (x.span || 1), 0);
  while (used < COLS.length) {
    cells.push(e());
    used += 1;
  }
  return (
    <tr className={rowHeight(n)}>
      <th scope="row" className={`border-r border-b border-r-[#ababab] border-b-[#dedede] p-0 text-center align-top text-[14px] leading-[19px] font-normal text-[#444] ${UI}`}>{n}</th>
      {cells.map((x, i) => (
        <td
          key={i}
          colSpan={x.span || 1}
          className={`whitespace-nowrap border-r border-r-[#d4d4d4] p-0 align-top leading-[19px] ${x.a} ${x.line ? LINE[x.line] : "border-b border-b-[#d4d4d4]"}`}
        >
          {x.t}
        </td>
      ))}
    </tr>
  );
}

function Grid() {
  const rows = Array.from({ length: 38 }, (_, i) => 37 + i);
  return (
    <div className="flex min-h-0 flex-1 bg-white">
      <div className="min-w-0 flex-1 overflow-hidden border-r border-[#ababab]">
        <table className="w-full table-fixed border-separate border-spacing-0 font-['Liberation_Sans',Arial,sans-serif] text-[15px] text-black">
          <colgroup>
            <col className="w-[34px]" />
            {COLS.map(([k, w], i) => <col key={k + i} className={w} />)}
          </colgroup>
          <thead>
            <tr className={`h-[23px] ${UI}`}>
              <th className="border-r border-b border-r-[#ababab] border-b-[#dedede] p-0">
                <svg width="15" height="15" className="ml-auto mr-[3px]" fill="#dcdcdc"><path d="M15 0v15H0z" /></svg>
              </th>
              {COLS.map(([k], i) => (
                <th
                  key={k + i}
                  scope="col"
                  className={`p-0 text-center text-[14px] leading-5 font-normal ${k === "A" ? "border-r border-b-2 border-r-[#ababab] border-b-[#217346] bg-[#e1e1e1] text-[#217346]" : "border-r border-b border-r-[#dedede] border-b-[#ababab] text-[#444]"}`}
                >
                  {k}
                </th>
              ))}
            </tr>
          </thead>
          <tbody>{rows.map((n) => <Row key={n} n={n} />)}</tbody>
        </table>
      </div>
      <div className="flex w-[21px] shrink-0 flex-col pt-[2px] pr-[3px] pl-[2px]">
        <Btn label="Scroll up" className="h-[15px] border border-[#777] bg-white"><svg width="7" height="4" fill="#666"><path d="M3.500 0 7 4H0z" /></svg></Btn>
        <div className="flex min-h-0 flex-1 flex-col justify-end bg-[#f0f0f0]">
          <div className="h-[381px] border border-b-0 border-[#777] bg-white" />
        </div>
        <Btn label="Scroll down" className="h-[15px] border border-[#777] bg-white"><svg width="7" height="4" fill="#666"><path d="M0 0h7L3.500 4z" /></svg></Btn>
      </div>
    </div>
  );
}

/* ---------- sheet tabs and status ---------- */

function SheetTabs() {
  return (
    <div className="flex h-[29px] shrink-0 border-t border-[#ababab] border-b-2 border-b-white bg-[#f4f4f4]">
      <div className="flex w-[100px] items-center gap-6 pl-[27px]">
        <Btn label="Previous sheet"><svg width="5" height="8" fill="#bbb"><path d="M5 0v8L0 4z" /></svg></Btn>
        <Btn label="Next sheet"><svg width="5" height="8" fill="#bbb"><path d="M0 0v8l5-4z" /></svg></Btn>
      </div>
      <button type="button" className="-mt-px h-[26px] w-[119px] border-x border-b-2 border-x-[#ababab] border-b-[#217346] bg-white text-[13px] font-semibold text-[#217346]">Chapter 6 Form</button>
      <Btn label="New sheet" className="ml-8">
        <Icon w={17} h={17}>
          <circle cx="8.500" cy="8.500" r="7.500" stroke="#777" />
          <path d="M8.500 4.500v8M4.500 8.500h8" stroke="#666" strokeWidth="2" />
        </Icon>
      </Btn>
      <div className="ml-auto flex w-[768px] items-center">
        <Icon w={2} h={10}><path d="M1 0v10" stroke="#999" strokeWidth="2" strokeDasharray="2 2" /></Icon>
        <Btn label="Scroll left" className="ml-[15px] h-[15px] w-[15px] border border-[#777] bg-white"><svg width="4" height="7" fill="#666"><path d="M4 0v7L0 3.500z" /></svg></Btn>
        <div className="flex h-[15px] flex-1 bg-[#e8e8e8]">
          <div className="mr-[37px] flex-1 border border-[#777] bg-white" />
        </div>
        <Btn label="Scroll right" className="mr-[21px] h-[15px] w-[15px] border border-[#777] bg-white"><svg width="4" height="7" fill="#666"><path d="M0 0v7l4-3.500z" /></svg></Btn>
      </div>
    </div>
  );
}

function StatusBar() {
  return (
    <div className="flex h-[21px] shrink-0 items-center bg-[#217346] text-[11px] text-white">
      <span className="w-[57px] pl-[7px]">Ready</span>
      <button type="button" className="flex items-center gap-[2px]">
        <Icon w={16} h={15}>
          <path d="M1 3.500 4 5v4l-1.500 5M1 3.500 3 2l3 1.500M12 3.500 9 5v3M12 3.500 10 2 7.500 3.500M4.500 14 6 10" stroke="#fff" strokeWidth="1.200" />
          <circle cx="6.500" cy="2" r="1.500" stroke="#fff" />
          <path d="m7.500 11 3 3 5-5.500" stroke="#fff" strokeWidth="1.300" />
        </Icon>
        Accessibility: Good to go
      </button>
      <div className="ml-auto flex h-[21px] items-center">
        <Btn label="Normal view" className="h-[21px] w-10 bg-[#004b1c]">
          <Icon w={13} h={14}><path d="M.5.500h12v13H.5zM4.500.5v13M8.500.5v13M.5 4.500h12M.5 9h12" stroke="#fff" /></Icon>
        </Btn>
        <Btn label="Page layout view" className="h-[21px] w-10">
          <Icon w={14} h={14}><path d="M.5.500h13v13H.5zM3.500 2.500h7v9h-7zM5 5h4M5 7h4M5 9h4" stroke="#fff" /></Icon>
        </Btn>
        <Btn label="Page break view" className="h-[21px] w-10">
          <Icon w={14} h={14}><path d="M.5.500h13v13H.5zM5 .5v7M9.500.500v7M.5 8h9.500" stroke="#fff" /></Icon>
        </Btn>
        <Btn label="Zoom out" className="ml-[5px] w-[14px]"><Icon w={8} h={1}><path d="M0 .5h8" stroke="#fff" /></Icon></Btn>
        <input
          type="range"
          aria-label="Zoom"
          min="0"
          max="100"
          defaultValue="53"
          className="h-3 w-[100px] appearance-none bg-[linear-gradient(#fff,#fff)] bg-[length:100%_1px] bg-center bg-no-repeat [&::-webkit-slider-thumb]:h-[11px] [&::-webkit-slider-thumb]:w-[5px] [&::-webkit-slider-thumb]:appearance-none [&::-webkit-slider-thumb]:bg-white"
        />
        <Btn label="Zoom in" className="w-[18px]"><Icon w={9} h={9}><path d="M0 4.500h9M4.500 0v9" stroke="#fff" /></Icon></Btn>
        <span className="w-11 pr-2 text-right">115%</span>
      </div>
    </div>
  );
}

/* ---------- taskbar ---------- */

function SeaArt() {
  return (
    <svg width="80" height="38" viewBox="0 0 80 38" className="shrink-0">
      <defs>
        <linearGradient id="sea" x1="0" y1="0" x2="1" y2="1">
          <stop offset="0" stopColor="#7fd3e8" />
          <stop offset="1" stopColor="#1273d8" />
        </linearGradient>
      </defs>
      <path d="M1 38C8 22 22 16 40 17c14 0 24-3 40 1v20z" fill="url(#sea)" />
      <path d="M55 17c-3-4 0-6 2-4 0-5 4-7 5-3 3-4 7 0 4 3 5-1 5 4 1 5z" fill="#7fd3ee" />
      <circle cx="7" cy="15" r="2" fill="#b5e0f5" />
      <circle cx="12" cy="10" r="2.500" fill="#a6d8f2" />
      <circle cx="8" cy="22" r="1.500" fill="#b5e0f5" />
      <path d="M21 10c3-6 12-7 18-2 5 2 9 6 13 8l5 1-5 4c-4 1-6-1-8-4-8 0-15-3-18-6-2 0-4 0-5-1z" fill="#7f9aa5" />
      <path d="M27 11c5 4 10 5 16 5l-6 2z" fill="#c4d2d8" />
      <path d="m9 20 8 5 7-5 2 7 8 6-9 1-6 4-2-6-7 1 3-6z" fill="#f79a5b" />
      <circle cx="19" cy="29" r="3" fill="#ffe4cc" />
      <path d="M52 25c1-5 9-5 9 0 0 3-2 5-2 7l8 5z" fill="#ff7a4d" />
      <path d="M55 32c-3 0-6 3-9 2M53 29c-3 0-5 1-8-1M61 29c3 1 5 0 8-2M57 33c1 2 0 3-1 5M60 32c3 1 5 4 9 3M52 34l-3 4" fill="none" stroke="#f0643a" strokeWidth="1.800" strokeLinecap="round" />
    </svg>
  );
}

function Task({ label, width, line = "border-transparent", bg = "", children }) {
  return (
    <button type="button" aria-label={label} className={`flex h-10 shrink-0 items-center justify-center border-y-2 border-t-transparent ${width} ${line} ${bg}`}>
      {children}
    </button>
  );
}

function Taskbar() {
  return (
    <footer className="flex h-10 shrink-0 items-center bg-linear-to-r from-[#d6dae3] via-[#d9dbe0] to-[#d8d8da] text-[#1c1c1c]">
      <Task label="Start" width="w-12">
        <svg width="16" height="16" fill="#000"><path d="M0 2.300 6.600 1.400v6.200H0zM7.500 1.300 16 0v7.600H7.500zM0 8.400h6.600v6.200L0 13.700zM7.500 8.400H16V16l-8.500-1.200z" /></svg>
      </Task>
      <label className="flex h-10 w-[344px] shrink-0 items-center border border-[#c0c0c0] bg-white pl-[11px]">
        <Icon w={17} h={17}>
          <circle cx="10.500" cy="6.500" r="5.500" stroke="#111" strokeWidth="1.400" />
          <path d="M6.500 10.500.8 16.300" stroke="#111" strokeWidth="1.400" />
        </Icon>
        <input aria-label="Type here to search" placeholder="Type here to search" className="ml-[11px] min-w-0 flex-1 text-[14px] outline-none placeholder:text-[#333]" />
        <SeaArt />
      </label>
      <Task label="Cortana" width="w-12"><Icon w={16} h={16}><circle cx="8" cy="8" r="6.500" stroke="#111" strokeWidth="2" /></Icon></Task>
      <Task label="Task view" width="w-12">
        <Icon w={16} h={16}><path d="M1.500 4.500h9v7h-9zM1.500 0v2.500h9V0M1.500 16v-2.500h9V16M14 0v3M14 8v8" stroke="#111" strokeWidth="1.200" /><path d="M12.500 4h3v3h-3z" fill="#111" stroke="none" /></Icon>
      </Task>
      <span className="flex w-4 justify-center gap-[2px]"><i className="h-4 w-px bg-black" /><i className="h-4 w-px bg-black" /></span>
      <Task label="Mail" width="w-[68px] pl-2">
        <span className="relative flex">
          <svg width="36" height="28" viewBox="0 0 36 28">
            <path d="M0 9 12 1l12 8v15H0z" fill="#0a5ba8" />
            <path d="M2 9h20l-10 8z" fill="#fff" />
            <path d="M0 9l12 9 12-9v15H0z" fill="#2aa5e8" />
          </svg>
          <span className="absolute right-0 bottom-[-2px] rounded-full border border-[#666] bg-[#c9d2da]/80 px-[2px] text-[11px] leading-4 font-semibold">99+</span>
        </span>
      </Task>
      <Task label="File Explorer" width="w-[26px]">
        <svg width="22" height="20" viewBox="0 0 22 20">
          <path d="M0 0h9l1 2v4H0z" fill="#d89a1a" />
          <path d="M0 4h9l2-2h10v17H0z" fill="#fcd462" />
          <path d="M4 19v-6c0-1 1-2 2-2h9c1 0 2 1 2 2v6h-4v-4H8v4z" fill="#3f8fd4" />
        </svg>
      </Task>
      <Task label="Store" width="w-[70px]">
        <svg width="23" height="25" viewBox="0 0 23 25">
          <path d="M6 6V1.500h11V6" fill="none" stroke="#35b5ea" strokeWidth="1.800" />
          <path d="M0 5h23v17c0 2-1 3-3 3H3c-2 0-3-1-3-3z" fill="#174f86" />
          <path d="M7 9.500h4v4H7z" fill="#f25022" /><path d="M12 9.500h4v4h-4z" fill="#7fba00" />
          <path d="M7 14.500h4v4H7z" fill="#00a4ef" /><path d="M12 14.500h4v4h-4z" fill="#ffb900" />
        </svg>
      </Task>
      <Task label="Edge" width="w-[40px] mr-[57px] -ml-[5px]" line="border-b-[#0a78d4]">
        <svg width="24" height="25" viewBox="0 0 24 25">
          <defs>
            <linearGradient id="edgeTop" x1="0" y1="0.300" x2="1" y2="0.600">
              <stop offset="0" stopColor="#1a8fdc" />
              <stop offset="0.500" stopColor="#2cc3d0" />
              <stop offset="1" stopColor="#66dd50" />
            </linearGradient>
            <linearGradient id="edgeSide" x1="0" y1="0" x2="0.500" y2="1">
              <stop offset="0" stopColor="#1b9be6" />
              <stop offset="1" stopColor="#0d62b8" />
            </linearGradient>
          </defs>
          <path d="M0 13C0 5 5.500.5 12 .5S24 5.500 24 11c0 4-3 6-6.500 6-3.500 0-5-1.500-3.500-3.500C16 10 12 7.500 8.500 7.500 4 7.500 1 10 0 13z" fill="url(#edgeTop)" />
          <path d="M0 13C.5 8 5 6.500 9 7.500c3 .8 5 3 5 5-4-2-7 2-5 6.500 1 3 3 5 5 5.300C7 25.500 0 21 0 13z" fill="url(#edgeSide)" />
          <path d="M14 12.500c-4-2.500-7.500 1.500-5.500 6.500 1 3 3.500 5.200 6 5.200 3-.4 6-2.200 7.700-5 .3-.7-.2-1-.9-.7-5.300 2-10-.5-7.300-6z" fill="#0c4a94" />
        </svg>
      </Task>
      <Task label="Microsoft 365" width="w-10">
        <svg width="21" height="24" viewBox="0 0 21 24">
          <defs>
            <linearGradient id="hexA" x1="0" y1="0" x2="0" y2="1"><stop offset="0" stopColor="#2a55b5" /><stop offset="1" stopColor="#52c4ee" /></linearGradient>
            <linearGradient id="hexB" x1="0" y1="0" x2="1" y2="1"><stop offset="0" stopColor="#4a5fc4" /><stop offset="1" stopColor="#b98cf0" /></linearGradient>
            <linearGradient id="hexC" x1="0" y1="0" x2="1" y2="0"><stop offset="0" stopColor="#c07be8" /><stop offset="1" stopColor="#6b45b0" /></linearGradient>
          </defs>
          <path d="M8 1.500c2-1.200 3.500-1.200 5 0l6.500 4c1 .6 1.500 1.500 1.500 2.500v6l-7-4V8l-4-3z" fill="url(#hexA)" />
          <path d="M8 1.500 1.500 5.500C.5 6 0 7 0 8v8c0 1 .5 2 1.500 2.500L7 15V9l6-4z" fill="url(#hexB)" />
          <path d="M1.500 18.500 8 22.500c1.500 1 3.500 1 5 0l6.500-4c1-.6 1.500-1.500 1.500-2.500v-2l-7-3v3l-5.500 3.500L7 15z" fill="url(#hexC)" />
          <path d="m7 10 3.500-2 3.500 2v4l-3.500 2L7 14z" fill="#dadce1" />
        </svg>
      </Task>
      <Task label="Origin" width="w-10 ml-[9px]" line="border-b-[#0a78d4]">
        <svg width="20" height="26" viewBox="0 0 20 26">
          <path d="M12 0 9 4c6-1 10 3 10 9 0 5-4 9-8 13l1-4C5 23 1 19 1 13 1 7 6 2 12 0z" fill="#e85d2c" />
          <circle cx="10" cy="13" r="3.500" fill="#dcdde1" />
        </svg>
      </Task>
      <Task label="PowerPoint" width="w-10 ml-[9px]" line="border-b-[#0a78d4]">
        <svg width="24" height="24" viewBox="0 0 24 24">
          <circle cx="13" cy="12" r="11" fill="#d9532c" />
          <path d="M13 1a11 11 0 0 1 11 11H13z" fill="#ff8f6b" />
          <path d="M13 1v11H2A11 11 0 0 1 13 1z" fill="#ed6c47" />
          <rect x="0" y="6" width="12" height="12" rx="1" fill="#b9321b" />
          <text x="6" y="15.500" fontSize="10" fontWeight="700" textAnchor="middle" fill="#fff">P</text>
        </svg>
      </Task>
      <Task label="Excel" width="w-[45px] ml-[5px]" line="border-b-[#0a78d4]" bg="bg-[#efefef]">
        <svg width="24" height="24" viewBox="0 0 24 24">
          <path d="M6 1h18v22H6z" fill="#21a366" />
          <path d="M15 1h9v7h-9z" fill="#33c481" />
          <path d="M6 8h9v7H6z" fill="#107c41" />
          <path d="M6 15h18v8H6z" fill="#185c37" />
          <rect x="0" y="6" width="12" height="12" rx="1" fill="#107c41" />
          <text x="6" y="15.500" fontSize="10" fontWeight="700" textAnchor="middle" fill="#fff">X</text>
        </svg>
      </Task>
      <Task label="LockDown Browser" width="w-12 ml-1" line="border-b-[#f2730d]" bg="bg-[#f9ae79]">
        <span className="flex size-6 items-center justify-center bg-[#22a9d8]">
          <svg width="15" height="18" viewBox="0 0 15 18"><path d="M5 0 0 16l5 1z" fill="#123a63" /><path d="M4.500 0H8v13h6v4H4.500z" fill="#fff" /></svg>
        </span>
      </Task>

      <div className="ml-auto flex h-10 items-center text-[12px]">
        <div className="flex items-center">
          <span className="flex h-5 w-[49px] items-center justify-center border-2 border-white bg-[linear-gradient(90deg,#16984a_51%,#000_51%)] text-[13px] text-white">51%</span>
          <span className="h-[11px] w-[2px] bg-white" />
        </div>
        <button type="button" className="ml-[106px] flex items-center gap-[9px] text-[13px]">
          <svg width="24" height="24" viewBox="0 0 24 24">
            <path d="M12 .5c1 0 1.500.5 2 1.500l9 18c1 2 0 3.500-2 3.500H3c-2 0-3-1.500-2-3.500L10 2c.5-1 1-1.500 2-1.500z" fill="#f5c518" />
            <path d="M7 11c4-2 6 0 6 3 3-2 5-1 5 1 0 4-2 6-4 6-2 0-3-1-3-3-3 0-5-3-4-7z" fill="#4a3b10" />
          </svg>
          <span className="w-[69px] text-left whitespace-nowrap">Polluted air</span>
        </button>
        <Btn label="Hidden icons" className="ml-[21px] w-3"><Icon w={12} h={8}><path d="m1 6.500 5-5 5 5" stroke="#111" strokeWidth="1.400" /></Icon></Btn>
        <Btn label="Meet now" className="ml-[21px] w-3">
          <Icon w={12} h={16}><path d="M1.500 4.500h6v7h-6zM7.500 7l3-1.500v5l-3-1.500M2 2c2-1.500 5-1.500 7 0M2 14c2 1.500 5 1.500 7 0" stroke="#111" strokeWidth="1.200" /></Icon>
        </Btn>
        <Btn label="Volume" className="ml-[17px] w-4">
          <Icon w={16} h={14}><path d="M1 5h2l3.500-3v10L3 9H1zM8.500 5c1 1 1 3 0 4M10.500 3.500c2 2 2 5 0 7" stroke="#111" strokeWidth="1.100" /><path d="M13 2c2.500 3 2.500 7 0 10" stroke="#999" /></Icon>
        </Btn>
        <button type="button" className="w-[80px] text-center text-[12px] leading-[18px] whitespace-nowrap">11:40 AM<br />6/8/2023</button>
        <Btn label="Notifications" className="relative ml-[4px] w-6">
          <svg width="24" height="26" viewBox="0 0 24 26">
            <path d="M1 2h16v12H8l-3 3v-3H1z" fill="#111" />
            <path d="M4 5h10M4 8h10M4 11h7" stroke="#fff" />
            <circle cx="16" cy="17.500" r="7.500" fill="#cfcfd2" stroke="#555" />
            <text x="16" y="22" fontSize="12" fontWeight="600" textAnchor="middle" fill="#111">4</text>
          </svg>
        </Btn>
        <span className="mr-1 ml-3 h-10 w-px bg-[#aaa]" />
      </div>
    </footer>
  );
}

export default function App() {
  return (
    <div className={`flex h-screen flex-col overflow-hidden bg-white ${UI}`}>
      <TitleBar />
      <Tabs />
      <Ribbon />
      <FormulaBar />
      <Grid />
      <SheetTabs />
      <StatusBar />
      <Taskbar />
    </div>
  );
}
